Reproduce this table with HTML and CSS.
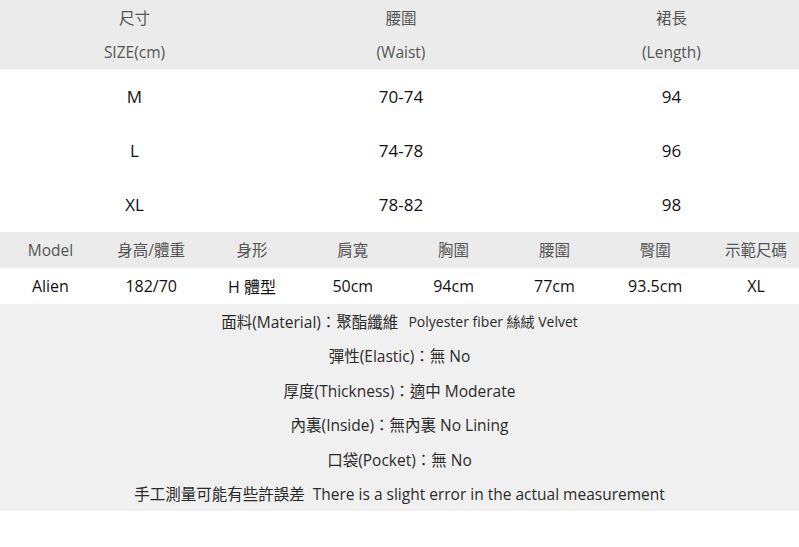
FILE: index.html
```html
<!DOCTYPE html>
<html lang="zh-Hant">
<head>
<meta charset="utf-8">
<title>Size chart</title>
<link rel="stylesheet" href="styles.css">
</head>
<body>
<div class="size-table">
  <div class="size-head">
    <div class="cell">尺寸</div><div class="cell">腰圍</div><div class="cell">裙長</div>
    <div class="cell">SIZE(cm)</div><div class="cell">(Waist)</div><div class="cell">(Length)</div>
  </div>
  <div class="size-body">
    <div class="cell">M</div><div class="cell">70-74</div><div class="cell">94</div>
    <div class="cell">L</div><div class="cell">74-78</div><div class="cell">96</div>
    <div class="cell">XL</div><div class="cell">78-82</div><div class="cell">98</div>
  </div>
</div>
<div class="model-table">
  <div class="model-head">
    <div class="cell">Model</div><div class="cell">身高/體重</div><div class="cell">身形</div><div class="cell">肩寬</div>
    <div class="cell">胸圍</div><div class="cell">腰圍</div><div class="cell">臀圍</div><div class="cell">示範尺碼</div>
  </div>
  <div class="model-body">
    <div class="cell">Alien</div><div class="cell">182/70</div><div class="cell">H 體型</div><div class="cell">50cm</div>
    <div class="cell">94cm</div><div class="cell">77cm</div><div class="cell">93.5cm</div><div class="cell">XL</div>
  </div>
</div>
<div class="info">
  <p class="line">面料(Material)：聚酯纖維&nbsp; <span class="small">Polyester fiber 絲絨 Velvet</span></p>
  <p class="line">彈性(Elastic)：無 No</p>
  <p class="line">厚度(Thickness)：適中 Moderate</p>
  <p class="line">內裏(Inside)：無內裏 No Lining</p>
  <p class="line">口袋(Pocket)：無 No</p>
  <p class="line">手工測量可能有些許誤差&nbsp; There is a slight error in the actual measurement</p>
</div>
</body>
</html>
```
FILE: styles.css
```css
html, body {
  margin: 0;
  padding: 0;
  background: #ffffff;
}
body {
  font-family: "Open Sans", "Noto Sans CJK TC", sans-serif;
  color: #222;
  width: 799px;
  overflow: hidden;
}
.cell {
  display: flex;
  align-items: center;
  justify-content: center;
  white-space: nowrap;
}
.size-head,
.size-body {
  display: grid;
  grid-template-columns: 269px 264px 277px;
}
.size-head {
  grid-auto-rows: 34.5px;
  background: #ebebeb;
  font-size: 15.5px;
  color: #555;
}
.size-body {
  grid-auto-rows: 54.3px;
  font-size: 17px;
  color: #111;
}
.model-head, .model-body {
  display: grid;
  grid-template-columns: repeat(8, 100.8px);
  height: 36px;
}
.model-head {
  background: #ebebeb;
  font-size: 15.5px;
  color: #555;
}
.model-body {
  font-size: 16px;
  color: #111;
}
.info {
  background: #f0f0f0;
}
.line {
  margin: 0;
  height: 34.5px;
  display: flex;
  align-items: center;
  justify-content: center;
  font-size: 15.5px;
  color: #2a2a2a;
  white-space: pre;
}
.small {
  font-size: 14px;
  margin-left: 2px;
}
```
